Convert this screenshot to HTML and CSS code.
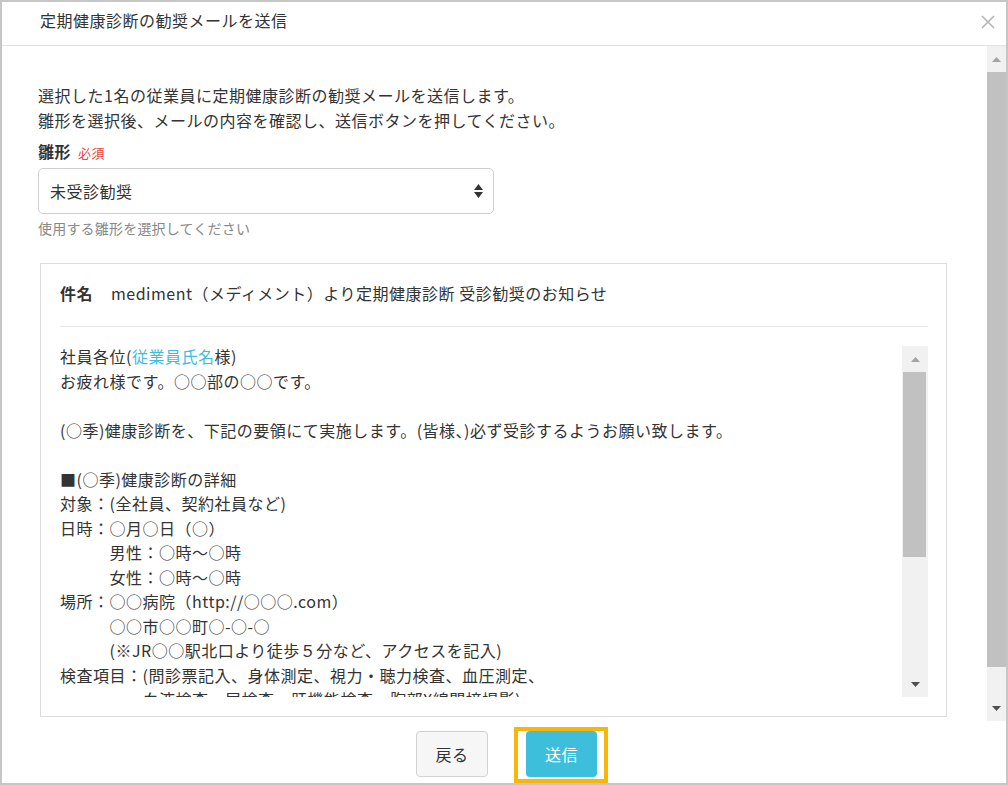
FILE: index.html
```html
<!DOCTYPE html>
<html lang="ja">
<head>
  <meta charset="UTF-8" />
  <title>定期健康診断の勧奨メールを送信</title>
  <link rel="stylesheet" href="styles.css">
</head>
<body>

  <div class="modal">
    <header class="modal-header">
      <h2 class="modal-title">定期健康診断の勧奨メールを送信</h2>
      <svg class="close" width="14" height="14" viewBox="0 0 14 14">
        <path d="M1 1 L13 13 M13 1 L1 13" stroke="#b4b4b4" stroke-width="1.6" fill="none"/>
      </svg>
    </header>

    <div class="modal-main">
      <div class="modal-body">
        <p class="lead">選択した1名の従業員に定期健康診断の勧奨メールを送信します。<br>雛形を選択後、メールの内容を確認し、送信ボタンを押してください。</p>

        <div class="field-label">雛形<span class="required">必須</span></div>
        <div class="select">
          <span>未受診勧奨</span>
          <svg width="9" height="14" viewBox="0 0 9 14">
            <path d="M0 6 L4.5 0 L9 6 Z M0 8 L9 8 L4.5 14 Z" fill="#333"/>
          </svg>
        </div>
        <div class="help">使用する雛形を選択してください</div>

        <div class="mail">
          <div class="mail-subject"><span class="subject-label">件名</span>mediment（メディメント）より定期健康診断 受診勧奨のお知らせ</div>
          <div class="mail-body">
            <div class="mail-text">社員各位(<span class="var">従業員氏名</span>様)
お疲れ様です。○○部の○○です。

(○季)健康診断を、下記の要領にて実施します。(皆様、)必ず受診するようお願い致します。

■(○季)健康診断の詳細
対象：(全社員、契約社員など)
日時：○月○日（○）
　　　男性：○時～○時
　　　女性：○時～○時
場所：○○病院（http://○○○.com）
　　　○○市○○町○-○-○
　　　(※JR○○駅北口より徒歩５分など、アクセスを記入)
検査項目：(問診票記入、身体測定、視力・聴力検査、血圧測定、
　　　　　血液検査、尿検査、肝機能検査、胸部X線間接撮影)</div>
            <div class="scrollbar scrollbar-inner">
              <div class="sb-btn"><svg width="9" height="5" viewBox="0 0 9 5"><path d="M0 5 L4.5 0 L9 5 Z" fill="#a3a3a3"/></svg></div>
              <div class="sb-thumb"></div>
              <div class="sb-track"></div>
              <div class="sb-btn"><svg width="9" height="5" viewBox="0 0 9 5"><path d="M0 0 L9 0 L4.5 5 Z" fill="#505050"/></svg></div>
            </div>
          </div>
        </div>
      </div>

      <div class="scrollbar scrollbar-outer">
        <div class="sb-btn"><svg width="9" height="5" viewBox="0 0 9 5"><path d="M0 5 L4.5 0 L9 5 Z" fill="#a3a3a3"/></svg></div>
        <div class="sb-thumb"></div>
        <div class="sb-track"></div>
        <div class="sb-btn"><svg width="9" height="5" viewBox="0 0 9 5"><path d="M0 0 L9 0 L4.5 5 Z" fill="#505050"/></svg></div>
      </div>
    </div>

    <footer class="modal-footer">
      <button class="btn btn-back">戻る</button>
      <span class="highlight">
        <button class="btn btn-send">送信</button>
      </span>
    </footer>
  </div>

</body>
</html>
```

FILE: styles.css
```css
body {
  margin: 0;
  font-family: "Noto Sans CJK JP", "Noto Sans", sans-serif;
  color: #333;
  background: #fff;
  letter-spacing: 0.5px;
}

.modal {
  width: 1008px;
  height: 785px;
  box-sizing: border-box;
  border: 2px solid #c6c6c6;
  display: flex;
  flex-direction: column;
  overflow: hidden;
  background: #fff;
}

/* header */
.modal-header {
  height: 43px;
  display: flex;
  justify-content: space-between;
  align-items: flex-start;
  padding: 0 11px 0 38px;
  border-bottom: 1px solid #e2e2e2;
  flex-shrink: 0;
}

.modal-title {
  margin: 6px 0 0;
  font-size: 16px;
  font-weight: normal;
  line-height: 24px;
}

.close {
  margin-top: 13px;
}

/* body */
.modal-main {
  display: flex;
  height: 675px;
  flex-shrink: 0;
}

.modal-body {
  flex: 1;
  padding: 37px 40px 0 36px;
  overflow: hidden;
}

.lead {
  margin: 0;
  font-size: 16px;
  line-height: 25px;
}

.field-label {
  margin-top: 7px;
  height: 22px;
  font-size: 16px;
  font-weight: bold;
  line-height: 22px;
}

.required {
  margin-left: 7px;
  font-size: 13px;
  line-height: 1;
  font-weight: normal;
  color: #e8453c;
}

.select {
  margin-top: 6px;
  width: 456px;
  height: 46px;
  box-sizing: border-box;
  border: 1px solid #cfcfcf;
  border-radius: 5px;
  display: flex;
  align-items: center;
  justify-content: space-between;
  padding: 0 10px 0 11px;
  font-size: 16px;
}

.help {
  margin-top: 5px;
  font-size: 14px;
  line-height: 18px;
  letter-spacing: 0.2px;
  color: #888;
}

.mail {
  margin: 26px 0 0 2px;
  border: 1px solid #dcdcdc;
  padding: 0 18px 19px 19px;
}

.mail-subject {
  padding: 17px 0 21px;
  font-size: 16px;
  line-height: 24px;
  border-bottom: 1px solid #e6e6e6;
}

.subject-label {
  font-weight: bold;
  margin-right: 18px;
}

.mail-body {
  display: flex;
  margin-top: 17px;
  height: 353px;
}

.mail-text {
  flex: 1;
  overflow: hidden;
  white-space: pre-wrap;
  font-size: 16px;
  line-height: 24.5px;
}

.var {
  color: #3fbde0;
}

/* fake scrollbars */
.scrollbar {
  display: flex;
  flex-direction: column;
  background: #f1f1f1;
  flex-shrink: 0;
}

.sb-btn {
  display: flex;
  align-items: center;
  justify-content: center;
}

.sb-thumb {
  background: #c1c1c1;
}

.sb-track {
  flex: 1;
}

.scrollbar-inner {
  width: 26px;
  height: 351px;
  margin-top: 2px;
}

.scrollbar-inner .sb-btn {
  height: 26px;
}

.scrollbar-inner .sb-thumb {
  height: 185px;
  margin: 0 2px 0 1px;
}

.scrollbar-outer {
  width: 19px;
}

.scrollbar-outer .sb-btn {
  height: 26px;
}

.scrollbar-outer .sb-thumb {
  height: 595px;
}

/* footer */
.modal-footer {
  flex: 1;
  display: flex;
  justify-content: center;
  align-items: flex-start;
  gap: 26px;
  padding: 6px 0 0 16px;
  overflow: hidden;
}

.btn {
  height: 46px;
  font-family: inherit;
  font-size: 16px;
  letter-spacing: 0.5px;
  border-radius: 4px;
  cursor: pointer;
}

.btn-back {
  margin-top: 4px;
  width: 72px;
  background: #f6f6f6;
  border: 1px solid #d2d2d2;
  color: #333;
}

.highlight {
  display: flex;
  border: 4px solid #f6b60a;
  padding: 0 7px 2px 8px;
}

.btn-send {
  width: 71px;
  background: #3dbfdb;
  border: none;
  color: #fff;
}
```
